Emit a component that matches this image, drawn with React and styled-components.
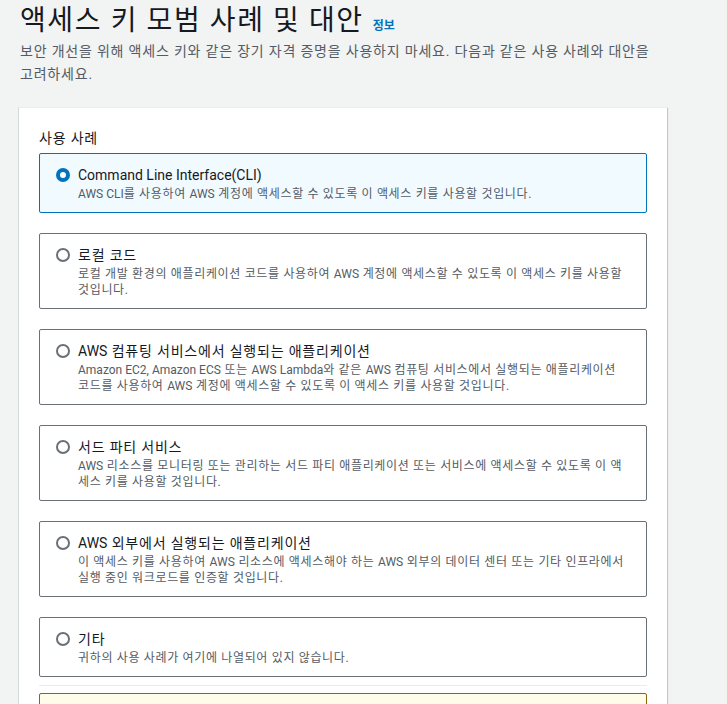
import React, { useState } from 'react';
import styled, { createGlobalStyle } from 'styled-components';

const GlobalStyle = createGlobalStyle`
  html, body {
    margin: 0;
    padding: 0;
    background: #f2f3f3;
  }
  body {
    font-family: Roboto, "Noto Sans CJK KR", sans-serif;
    color: #16191f;
  }
`;

const Page = styled.div`
  padding: 3px 60px 0 18px;
  height: 704px;
  overflow: hidden;
  box-sizing: border-box;
`;

const Header = styled.div`
  padding-left: 2px;
  margin-bottom: 21px;
`;

const TitleRow = styled.div`
  display: flex;
  align-items: baseline;
  gap: 9px;
`;

const Title = styled.h1`
  margin: 0;
  font-size: 28px;
  font-weight: 400;
  line-height: 36px;
  letter-spacing: 1.6px;
  color: #16191f;
`;

const InfoLink = styled.a`
  font-size: 12px;
  font-weight: 700;
  color: #0073bb;
  text-decoration: none;
`;

const Description = styled.p`
  margin: 1px 0 0;
  font-size: 14px;
  line-height: 23px;
  letter-spacing: 0.8px;
  word-break: keep-all;
  color: #545b64;
`;

const Panel = styled.section`
  background: #ffffff;
  border-top: 1px solid #eaeded;
  border-left: 1px solid #d5dbdb;
  box-shadow: 1px 1px 1px 0 rgba(0, 31, 63, 0.2);
  padding: 20px 20px 40px;
  width: 649px;
  box-sizing: border-box;
`;

const GroupLabel = styled.div`
  font-size: 14px;
  line-height: 20px;
  letter-spacing: 0.8px;
  color: #16191f;
  margin-bottom: 5px;
`;

const List = styled.div`
  display: flex;
  flex-direction: column;
  gap: 20px;
`;

const Card = styled.label`
  display: flex;
  gap: 8px;
  padding: 10px 12px 10px 16px;
  border: 1px solid ${p => (p.$selected ? '#0073bb' : '#687078')};
  background: ${p => (p.$selected ? '#f1faff' : '#ffffff')};
  border-radius: 2px;
  cursor: pointer;
`;

const Radio = styled.span`
  flex: none;
  width: 14px;
  height: 14px;
  margin-top: 4px;
  border-radius: 50%;
  box-sizing: border-box;
  border: ${p => (p.$checked ? '4px solid #0073bb' : '2px solid #687078')};
  background: #ffffff;
`;

const CardText = styled.div`
  display: flex;
  flex-direction: column;
  min-width: 0;
`;

const CardTitle = styled.span`
  font-size: 14px;
  line-height: 22px;
  letter-spacing: 0.8px;
  color: #16191f;
`;

const CardLine = styled.span`
  display: block;
  font-size: 12px;
  line-height: 16px;
  letter-spacing: 0.66px;
  white-space: nowrap;
  color: #545b64;
`;

const Latin = styled.span`
  letter-spacing: 0;
`;

const Divider = styled.hr`
  border: none;
  border-top: 1px solid #eaeded;
  margin: 8px 0 7px;
`;

const Alert = styled.div`
  border: 1px solid #8d6605;
  background: #fffce9;
  border-radius: 2px;
  height: 60px;
`;

// latin runs keep normal spacing, hangul gets the wider tracking
const Mixed = ({ text }) =>
  text.split(/([A-Za-z0-9(),]+(?: [A-Za-z0-9(),]+)*)/).map((part, i) =>
    /[A-Za-z]/.test(part) ? <Latin key={i}>{part}</Latin> : part
  );

const options = [
  {
    id: 'cli',
    title: 'Command Line Interface(CLI)',
    desc: ['AWS CLI를 사용하여 AWS 계정에 액세스할 수 있도록 이 액세스 키를 사용할 것입니다.'],
  },
  {
    id: 'local',
    title: '로컬 코드',
    desc: [
      '로컬 개발 환경의 애플리케이션 코드를 사용하여 AWS 계정에 액세스할 수 있도록 이 액세스 키를 사용할',
      '것입니다.',
    ],
  },
  {
    id: 'compute',
    title: 'AWS 컴퓨팅 서비스에서 실행되는 애플리케이션',
    desc: [
      'Amazon EC2, Amazon ECS 또는 AWS Lambda와 같은 AWS 컴퓨팅 서비스에서 실행되는 애플리케이션',
      '코드를 사용하여 AWS 계정에 액세스할 수 있도록 이 액세스 키를 사용할 것입니다.',
    ],
  },
  {
    id: 'third',
    title: '서드 파티 서비스',
    desc: [
      'AWS 리소스를 모니터링 또는 관리하는 서드 파티 애플리케이션 또는 서비스에 액세스할 수 있도록 이 액',
      '세스 키를 사용할 것입니다.',
    ],
  },
  {
    id: 'outside',
    title: 'AWS 외부에서 실행되는 애플리케이션',
    desc: [
      '이 액세스 키를 사용하여 AWS 리소스에 액세스해야 하는 AWS 외부의 데이터 센터 또는 기타 인프라에서',
      '실행 중인 워크로드를 인증할 것입니다.',
    ],
  },
  {
    id: 'other',
    title: '기타',
    desc: ['귀하의 사용 사례가 여기에 나열되어 있지 않습니다.'],
  },
];

export default function App() {
  const [selected, setSelected] = useState('cli');

  return (
    <>
      <GlobalStyle />
      <Page>
        <Header>
          <TitleRow>
            <Title>액세스 키 모범 사례 및 대안</Title>
            <InfoLink href="#">정보</InfoLink>
          </TitleRow>
          <Description>
            보안 개선을 위해 액세스 키와 같은 장기 자격 증명을 사용하지 마세요. 다음과 같은 사용 사례와 대안을 고려하세요.
          </Description>
        </Header>
        <Panel>
          <GroupLabel>사용 사례</GroupLabel>
          <List>
            {options.map(o => (
              <Card key={o.id} $selected={selected === o.id} onClick={() => setSelected(o.id)}>
                <Radio $checked={selected === o.id} />
                <CardText>
                  <CardTitle><Mixed text={o.title} /></CardTitle>
                  {o.desc.map(line => (
                    <CardLine key={line}><Mixed text={line} /></CardLine>
                  ))}
                </CardText>
              </Card>
            ))}
          </List>
          <Divider />
          <Alert />
        </Panel>
      </Page>
    </>
  );
}
